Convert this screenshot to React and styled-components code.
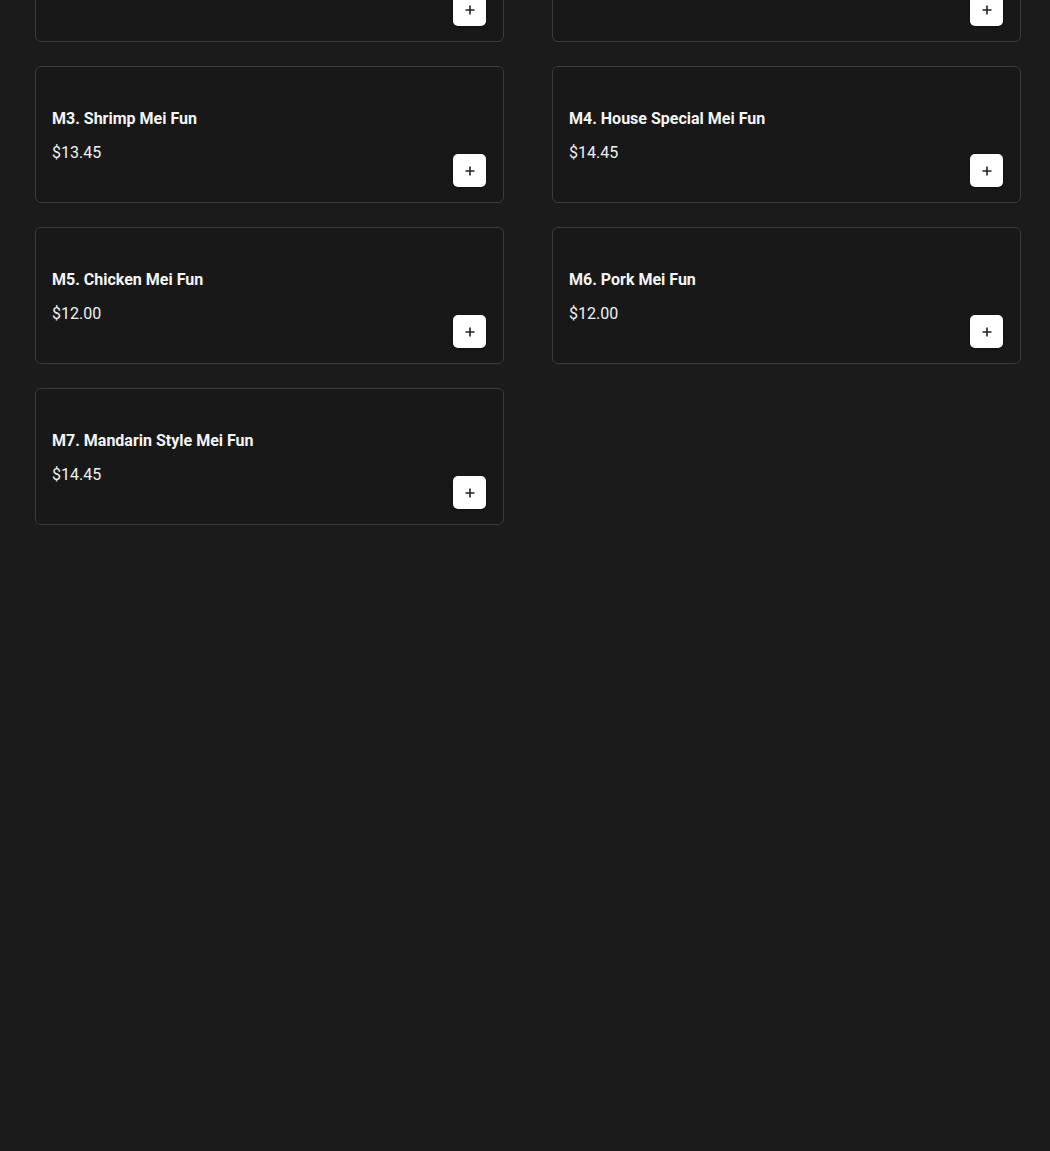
import styled, { createGlobalStyle } from 'styled-components';

const GlobalStyle = createGlobalStyle`
  html, body {
    margin: 0;
    background: #1b1b1b;
    font-family: Roboto, 'Liberation Sans', sans-serif;
    overflow: hidden;
  }
`;

const Page = styled.div`
  height: 1151px;
  overflow: hidden;
  background: #1b1b1b;
`;

const Grid = styled.div`
  display: grid;
  grid-template-columns: 469px 469px;
  column-gap: 48px;
  row-gap: 24px;
  padding: 0 29px 0 35px;
  margin-top: -95px;
`;

const Card = styled.div`
  box-sizing: border-box;
  height: 137px;
  display: flex;
  flex-direction: column;
  padding: 16px;
  background: #181818;
  border: 1px solid #3b3b3b;
  border-radius: 6px;
`;

const Title = styled.h3`
  margin: 26px 0 0;
  font-size: 16px;
  line-height: 20px;
  font-weight: 700;
  color: #f5f5f5;
`;

const Bottom = styled.div`
  display: flex;
  justify-content: space-between;
  align-items: flex-start;
  margin-top: 14px;
`;

const Price = styled.span`
  font-size: 16px;
  line-height: 20px;
  color: #f0f0f0;
`;

const AddButton = styled.button`
  width: 33px;
  height: 33px;
  margin-top: 11px;
  margin-right: 1px;
  padding: 0;
  display: flex;
  align-items: center;
  justify-content: center;
  background: #fff;
  border: none;
  border-radius: 5px;
  box-shadow: 0 1px 3px rgba(0, 0, 0, 0.4);
  cursor: pointer;
`;

const items = [
  { name: 'M1. Plain Mei Fun', price: '$10.45' },
  { name: 'M2. Beef Mei Fun', price: '$13.45' },
  { name: 'M3. Shrimp Mei Fun', price: '$13.45' },
  { name: 'M4. House Special Mei Fun', price: '$14.45' },
  { name: 'M5. Chicken Mei Fun', price: '$12.00' },
  { name: 'M6. Pork Mei Fun', price: '$12.00' },
  { name: 'M7. Mandarin Style Mei Fun', price: '$14.45' },
];

function PlusIcon() {
  return (
    <svg width="12" height="12" viewBox="0 0 12 12">
      <path d="M6 1.5v9M1.5 6h9" stroke="#222" strokeWidth="1.6" />
    </svg>
  );
}

export default function App() {
  return (
    <Page>
      <GlobalStyle />
      <Grid>
        {items.map((item) => (
          <Card key={item.name}>
            <Title>{item.name}</Title>
            <Bottom>
              <Price>{item.price}</Price>
              <AddButton aria-label="Add">
                <PlusIcon />
              </AddButton>
            </Bottom>
          </Card>
        ))}
      </Grid>
    </Page>
  );
}
